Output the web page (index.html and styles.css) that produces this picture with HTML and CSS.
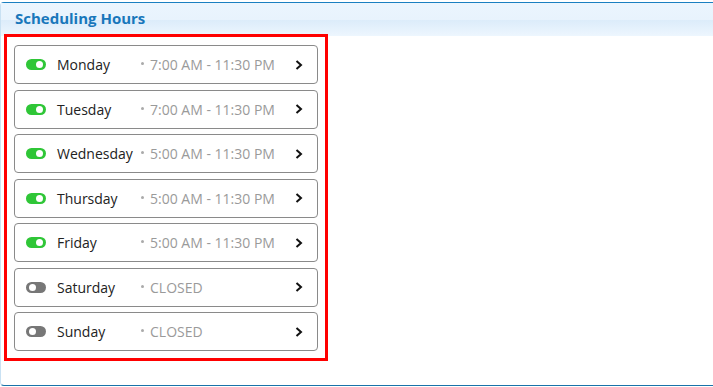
FILE: index.html
```html
<!DOCTYPE html>
<html lang="en">
<head>
    <meta charset="UTF-8">
    <title>Scheduling Hours</title>
    <link rel="stylesheet" href="styles.css">
</head>
<body>
    <div class="panel">
        <div class="panel-header">Scheduling Hours</div>
        <div class="panel-body">
            <div class="day-list">
                <div class="day-row">
                    <span class="toggle on"></span>
                    <span class="day-name">Monday</span>
                    <span class="hours"><i class="dot"></i>7:00 AM - 11:30 PM</span>
                    <svg class="chevron" width="8" height="10" viewBox="0 0 8 10"><polyline points="1.5,1 6,5 1.5,9" /></svg>
                </div>
                <div class="day-row">
                    <span class="toggle on"></span>
                    <span class="day-name">Tuesday</span>
                    <span class="hours"><i class="dot"></i>7:00 AM - 11:30 PM</span>
                    <svg class="chevron" width="8" height="10" viewBox="0 0 8 10"><polyline points="1.5,1 6,5 1.5,9" /></svg>
                </div>
                <div class="day-row">
                    <span class="toggle on"></span>
                    <span class="day-name">Wednesday</span>
                    <span class="hours"><i class="dot"></i>5:00 AM - 11:30 PM</span>
                    <svg class="chevron" width="8" height="10" viewBox="0 0 8 10"><polyline points="1.5,1 6,5 1.5,9" /></svg>
                </div>
                <div class="day-row">
                    <span class="toggle on"></span>
                    <span class="day-name">Thursday</span>
                    <span class="hours"><i class="dot"></i>5:00 AM - 11:30 PM</span>
                    <svg class="chevron" width="8" height="10" viewBox="0 0 8 10"><polyline points="1.5,1 6,5 1.5,9" /></svg>
                </div>
                <div class="day-row">
                    <span class="toggle on"></span>
                    <span class="day-name">Friday</span>
                    <span class="hours"><i class="dot"></i>5:00 AM - 11:30 PM</span>
                    <svg class="chevron" width="8" height="10" viewBox="0 0 8 10"><polyline points="1.5,1 6,5 1.5,9" /></svg>
                </div>
                <div class="day-row">
                    <span class="toggle"></span>
                    <span class="day-name">Saturday</span>
                    <span class="hours"><i class="dot"></i>CLOSED</span>
                    <svg class="chevron" width="8" height="10" viewBox="0 0 8 10"><polyline points="1.5,1 6,5 1.5,9" /></svg>
                </div>
                <div class="day-row">
                    <span class="toggle"></span>
                    <span class="day-name">Sunday</span>
                    <span class="hours"><i class="dot"></i>CLOSED</span>
                    <svg class="chevron" width="8" height="10" viewBox="0 0 8 10"><polyline points="1.5,1 6,5 1.5,9" /></svg>
                </div>
            </div>
        </div>
    </div>
</body>
</html>
```

FILE: styles.css
```css
body {
    font-family: "Open Sans", "Liberation Sans", sans-serif;
    background-color: #fff;
    margin: 0;
    padding: 2px 0 0;
    overflow: hidden;
}
.panel {
    box-sizing: border-box;
    height: 384px;
    border: 1px solid #c9e1f3;
    border-top-color: #1a7fc1;
    border-bottom-color: #1a72a8;
    border-right: none;
    border-radius: 4px 0 0 4px;
    display: flex;
    flex-direction: column;
}
.panel-header {
    height: 33px;
    padding: 5px 0 0 14px;
    box-sizing: border-box;
    font-size: 15px;
    font-weight: bold;
    color: #1877bb;
    background: linear-gradient(#ebf5fe 0%, #e8f3fd 50%, #dcecfa 52%, #edf6fe 100%);
}
.panel-body {
    flex: 1;
    padding: 0 0 0 3px;
}
.day-list {
    width: 324px;
    margin-top: -2px;
    border: 3px solid #ff0000;
    padding: 8px 7px 7px;
    box-sizing: border-box;
    display: flex;
    flex-direction: column;
    gap: 5.5px;
}
.day-row {
    height: 39px;
    box-sizing: border-box;
    border: 1px solid #8a8a8a;
    border-radius: 4px;
    display: flex;
    align-items: center;
    padding: 0 14px 0 11px;
}
.toggle {
    position: relative;
    width: 20px;
    height: 11px;
    border-radius: 6px;
    background-color: #777;
    flex: none;
}
.toggle:before {
    content: "";
    position: absolute;
    top: 2px;
    left: 3px;
    width: 7px;
    height: 7px;
    border-radius: 50%;
    background-color: #fff;
}
.toggle.on { background-color: #2fc637; }
.toggle.on:before { left: 10px; }
.day-name {
    width: 84px;
    margin-left: 11px;
    font-size: 14px;
    color: #222;
    white-space: nowrap;
}
.hours {
    flex: 1;
    display: flex;
    align-items: center;
    font-size: 14px;
    color: #9a9a9a;
}
.dot {
    width: 3px;
    height: 3px;
    border-radius: 50%;
    background-color: #aaa;
    margin: 0 6px 2px 0;
}
.chevron polyline {
    fill: none;
    stroke: #111;
    stroke-width: 2;
}
```
